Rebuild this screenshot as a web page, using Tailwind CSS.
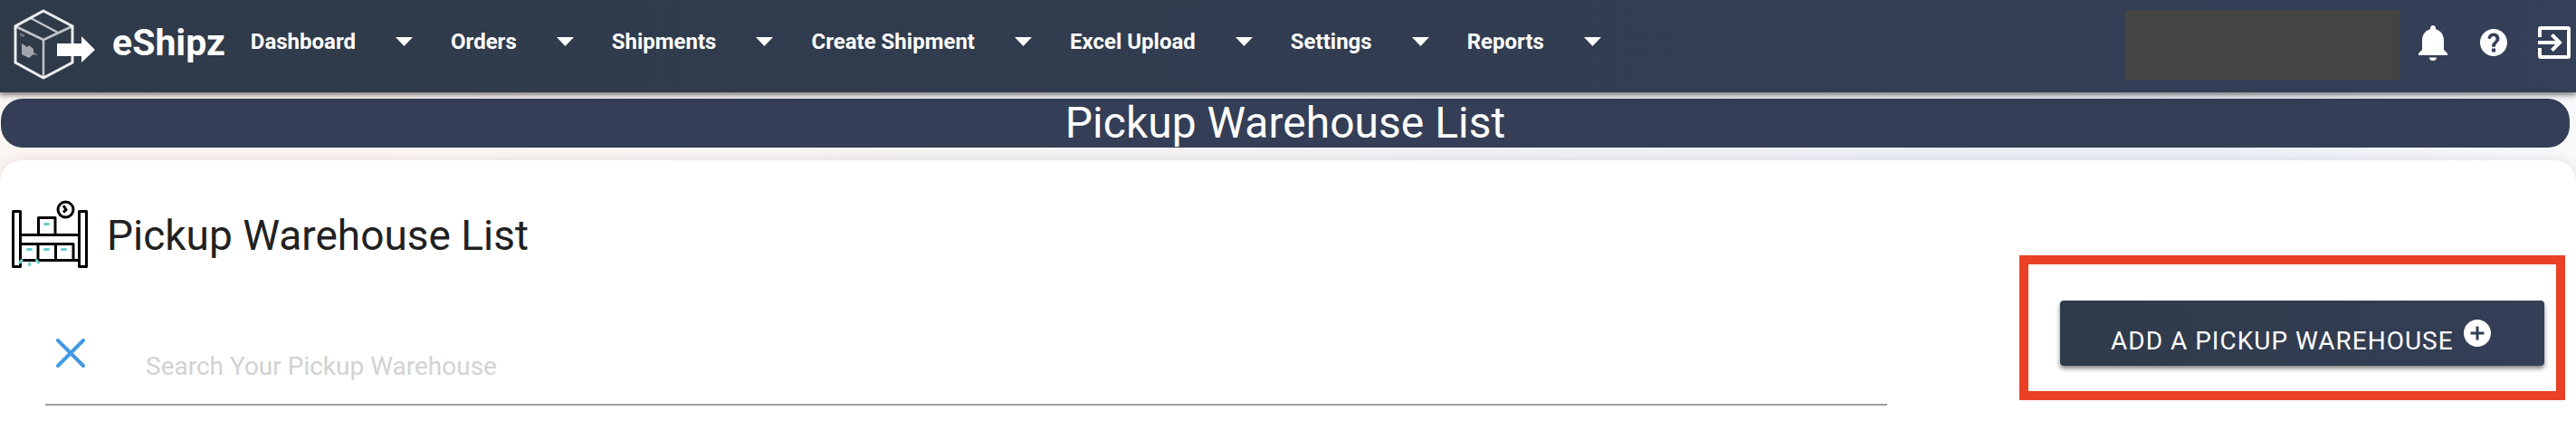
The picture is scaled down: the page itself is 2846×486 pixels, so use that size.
<!DOCTYPE html>
<html lang="en">

<head>
    <meta charset="UTF-8">
    <meta name="viewport" content="width=device-width, initial-scale=1.0">
    <title>Pickup Warehouse List</title>
    <script src="https://cdn.jsdelivr.net/npm/@tailwindcss/browser@4"></script>
</head>

<body class="min-h-screen flex flex-col overflow-x-hidden font-[Roboto,sans-serif] text-[#212121] bg-linear-to-r from-[#fcf6f3] from-15% via-[#ebeff8] via-85% to-[#f9f9fc]">
    <!-- top bar -->
    <header class="relative z-10 flex items-center h-[102px] pl-3 pb-1 text-white bg-linear-to-r from-[#2f3a49] to-[#343f58] shadow-[0_2px_6px_1px_rgba(0,0,0,0.5)]">
        <a href="#" class="flex items-center shrink-0 mr-7">
            <svg class="w-24 h-20" viewBox="0 0 96 80" fill="none" stroke="#fff">
                <path d="M36 3 L68 20 V60 L36 77 L5 60 V20 Z" stroke-width="3" stroke-opacity=".9" />
                <path d="M5 20 L36 35 L68 20 M36 35 V77 M22 11 L52 27" stroke-width="2.5" stroke-opacity=".7" />
                <path d="M12 39 L18 43 L20 41 L25 45 L25 49 L30 52 L25 51 L20 55 L12 51 Z" fill="#fff" stroke="none" opacity=".55" />
                <path d="M10 27 L16 30 L13 32 L10 30 Z" fill="#fff" stroke="none" opacity=".3" />
                <path d="M51 39 H78 V31 L93 46 L78 60 V53 H51 Z" fill="#fff" stroke="none" />
            </svg>
            <span class="ml-4 -mt-1 text-[41px] leading-none font-bold">eShipz</span>
        </a>
        <nav class="flex-1 flex items-center gap-[42px] pb-1.5 text-2xl font-bold whitespace-nowrap">
            <button class="flex items-center gap-11">Dashboard <svg class="w-[19px] h-2.5" viewBox="0 0 19 10" fill="#fff"><path d="M0 0H19L9.500 10Z" /></svg></button>
            <button class="flex items-center gap-11">Orders <svg class="w-[19px] h-2.5" viewBox="0 0 19 10" fill="#fff"><path d="M0 0H19L9.500 10Z" /></svg></button>
            <button class="flex items-center gap-11">Shipments <svg class="w-[19px] h-2.5" viewBox="0 0 19 10" fill="#fff"><path d="M0 0H19L9.500 10Z" /></svg></button>
            <button class="flex items-center gap-11">Create Shipment <svg class="w-[19px] h-2.5" viewBox="0 0 19 10" fill="#fff"><path d="M0 0H19L9.500 10Z" /></svg></button>
            <button class="flex items-center gap-11">Excel Upload <svg class="w-[19px] h-2.5" viewBox="0 0 19 10" fill="#fff"><path d="M0 0H19L9.500 10Z" /></svg></button>
            <button class="flex items-center gap-11">Settings <svg class="w-[19px] h-2.5" viewBox="0 0 19 10" fill="#fff"><path d="M0 0H19L9.500 10Z" /></svg></button>
            <button class="flex items-center gap-11">Reports <svg class="w-[19px] h-2.5" viewBox="0 0 19 10" fill="#fff"><path d="M0 0H19L9.500 10Z" /></svg></button>
        </nav>
        <div class="w-[303px] h-[77px] bg-[#444444]"></div>
        <div class="flex items-center shrink-0 ml-[13px] gap-[25px] pb-1">
            <button aria-label="Notifications">
                <svg class="w-12 h-12" viewBox="0 0 24 24" fill="#fff"><path d="M12 22c1.100 0 2-.7 2-1.800h-4c0 1.100.89 1.800 2 1.800zm6-6v-5c0-3.070-1.640-5.640-4.500-6.320V4c0-.83-.67-1.500-1.500-1.500s-1.500.67-1.500 1.500v.68C7.630 5.360 6 7.920 6 11v5l-2 2v1h16v-1l-2-2z" /></svg>
            </button>
            <button aria-label="Help">
                <svg class="w-9 h-9" viewBox="0 0 24 24" fill="#fff"><path d="M12 2C6.480 2 2 6.480 2 12s4.480 10 10 10 10-4.480 10-10S17.520 2 12 2zm1.400 17h-2.800v-2.600h2.800V19zm1.900-7.500l-.9.920C13.700 13.150 13.300 13.800 13.300 15.200h-2.600v-.5c0-1.100.45-2.100 1.170-2.830l1.240-1.260c.37-.36.590-.86.590-1.410 0-1.100-.8-1.800-1.800-1.800s-1.800.7-1.800 1.800H7.700C7.700 6.900 9.600 5 12 5s4.300 1.900 4.300 4.100c0 .94-.37 1.780-1 2.400z" /></svg>
            </button>
            <button aria-label="Logout">
                <svg class="w-12 h-12" viewBox="0 0 24 24" fill="none" stroke="#fff" stroke-width="2"><path d="M4 9V4.500Q4 4 4.500 4H19.500Q20 4 20 4.500V19.500Q20 20 19.500 20H4.500Q4 20 4 19.500V15M3 12H15M10.700 7.700L15 12L10.700 16.300" /></svg>
            </button>
        </div>
    </header>

    <div class="mt-[7px] ml-px mr-[7px] h-[54px] flex items-center justify-center rounded-3xl bg-[#343f57] text-white">
        <h1 class="text-5xl leading-none whitespace-nowrap">Pickup Warehouse List</h1>
    </div>

    <main class="relative flex-1 mt-3.5 pt-11 rounded-t-3xl bg-white shadow-[0_0_14px_rgba(60,40,40,0.12)]">
        <div class="flex items-center pl-3">
            <!-- warehouse shelf -->
            <svg class="w-[86px] h-20" viewBox="0 0 86 80" fill="none" stroke="#000" stroke-width="3">
                <path d="M2.500 12.500h8v61h-8zM75.500 12.500h8v61h-8zM10 38.500h65M10 66.500h65M10 48.500h59v18M30.500 38V19.500h18.500V38M30 49v17M49.500 49v17" stroke-linejoin="round" />
                <circle cx="60.500" cy="10.500" r="8.500" />
                <path d="M58 6l3 4.500l-3 3" />
                <path d="M37.500 26.500h4M18.500 54.500h4M37.500 54.500h4M56.500 54.500h4M10 69l2-2.500M20.500 70v1.500M28.500 66.500l2 2.500" stroke="#66cccc" stroke-width="3" stroke-linecap="round" />
            </svg>
            <h2 class="ml-5 pb-0.5 text-[46px] leading-none">Pickup Warehouse List</h2>
        </div>

        <div class="flex items-start pr-3">
            <div class="w-[2035px] shrink ml-[50px] h-[147px] flex items-end border-b-2 border-[#9e9e9e]">
                <button aria-label="Clear search" class="ml-3 mb-10">
                    <svg class="w-8 h-8" viewBox="0 0 32 32" stroke="#4299e1" stroke-width="4" stroke-linecap="round"><path d="M2 2L30 30M30 2L2 30" /></svg>
                </button>
                <input type="text" aria-label="Search Your Pickup Warehouse" placeholder="Search Your Pickup Warehouse" class="flex-1 ml-[67px] mb-[18px] h-12 text-[28px] outline-none placeholder:text-[#d2d2d2]">
            </div>
            <div class="ml-auto -mt-[19px] shrink-0 border-[10px] border-[#ea4025] pt-10 pb-7 pl-[35px] pr-[13px]">
                <button class="flex items-center w-[535px] h-[72px] pl-14 rounded bg-linear-to-r from-[#2f3a49] to-[#343f58] text-white text-[28px] tracking-[1px] whitespace-nowrap shadow-[0_3px_5px_rgba(0,0,0,0.5)]">
                    <span class="pt-[18px]">ADD A PICKUP WAREHOUSE</span>
                    <svg class="w-9 h-9 ml-2" viewBox="0 0 24 24" fill="#fff"><path d="M12 2C6.480 2 2 6.480 2 12s4.480 10 10 10 10-4.480 10-10S17.520 2 12 2zm5 11h-4v4h-2v-4H7v-2h4V7h2v4h4v2z" /></svg>
                </button>
            </div>
        </div>
    </main>
</body>

</html>
